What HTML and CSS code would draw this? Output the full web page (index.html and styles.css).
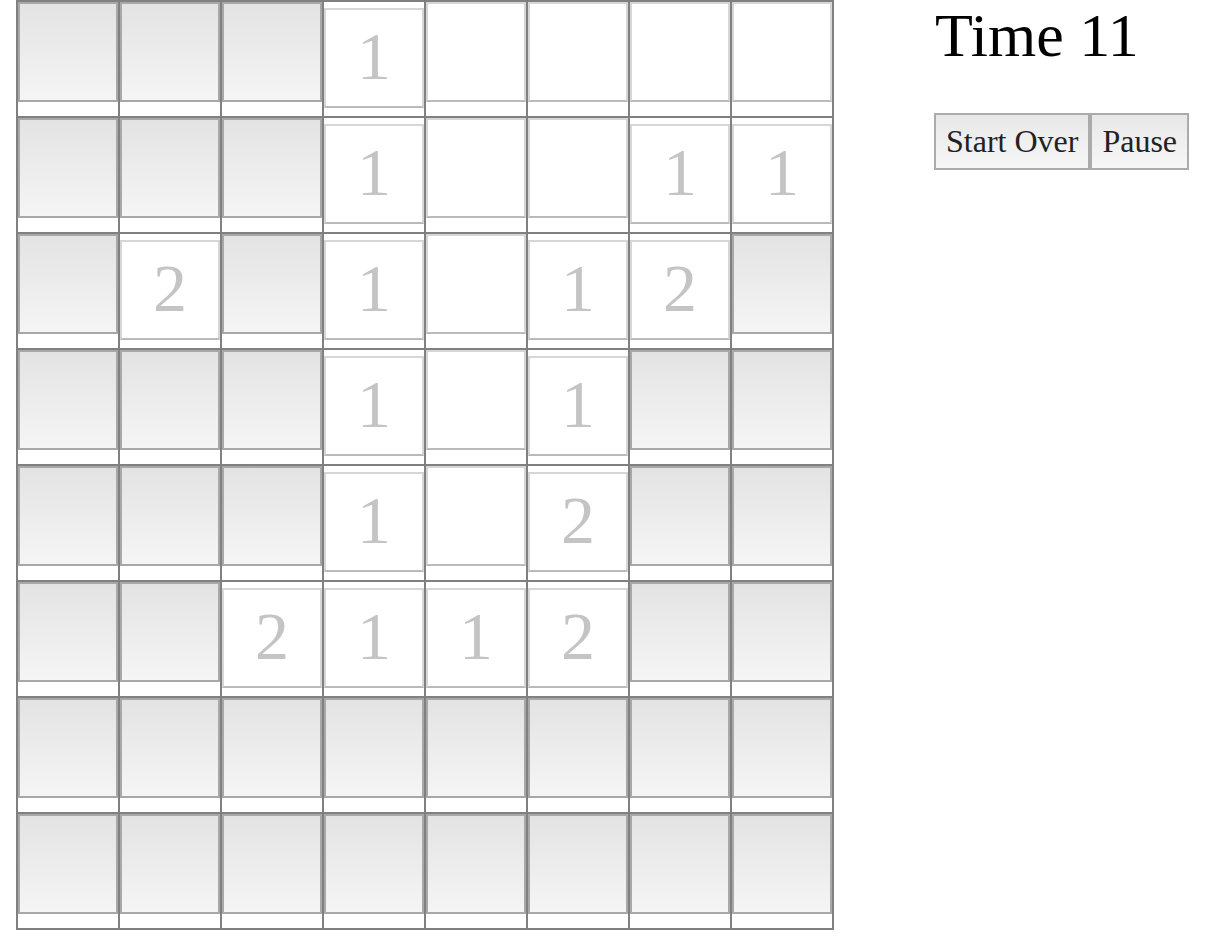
FILE: index.html
```html
<!DOCTYPE html>
<html>
<head>
<meta charset="utf-8">
<title>Minesweeper</title>
<link rel="stylesheet" href="styles.css">
</head>
<body>
<div class="page">
  <div class="board">
    <div class="cell"><button class="tile"></button></div>
    <div class="cell"><button class="tile"></button></div>
    <div class="cell"><button class="tile"></button></div>
    <div class="cell"><button class="tile open num">1</button></div>
    <div class="cell"><button class="tile open"></button></div>
    <div class="cell"><button class="tile open"></button></div>
    <div class="cell"><button class="tile open"></button></div>
    <div class="cell"><button class="tile open"></button></div>

    <div class="cell"><button class="tile"></button></div>
    <div class="cell"><button class="tile"></button></div>
    <div class="cell"><button class="tile"></button></div>
    <div class="cell"><button class="tile open num">1</button></div>
    <div class="cell"><button class="tile open"></button></div>
    <div class="cell"><button class="tile open"></button></div>
    <div class="cell"><button class="tile open num">1</button></div>
    <div class="cell"><button class="tile open num">1</button></div>

    <div class="cell"><button class="tile"></button></div>
    <div class="cell"><button class="tile open num">2</button></div>
    <div class="cell"><button class="tile"></button></div>
    <div class="cell"><button class="tile open num">1</button></div>
    <div class="cell"><button class="tile open"></button></div>
    <div class="cell"><button class="tile open num">1</button></div>
    <div class="cell"><button class="tile open num">2</button></div>
    <div class="cell"><button class="tile"></button></div>

    <div class="cell"><button class="tile"></button></div>
    <div class="cell"><button class="tile"></button></div>
    <div class="cell"><button class="tile"></button></div>
    <div class="cell"><button class="tile open num">1</button></div>
    <div class="cell"><button class="tile open"></button></div>
    <div class="cell"><button class="tile open num">1</button></div>
    <div class="cell"><button class="tile"></button></div>
    <div class="cell"><button class="tile"></button></div>

    <div class="cell"><button class="tile"></button></div>
    <div class="cell"><button class="tile"></button></div>
    <div class="cell"><button class="tile"></button></div>
    <div class="cell"><button class="tile open num">1</button></div>
    <div class="cell"><button class="tile open"></button></div>
    <div class="cell"><button class="tile open num">2</button></div>
    <div class="cell"><button class="tile"></button></div>
    <div class="cell"><button class="tile"></button></div>

    <div class="cell"><button class="tile"></button></div>
    <div class="cell"><button class="tile"></button></div>
    <div class="cell"><button class="tile open num">2</button></div>
    <div class="cell"><button class="tile open num">1</button></div>
    <div class="cell"><button class="tile open num">1</button></div>
    <div class="cell"><button class="tile open num">2</button></div>
    <div class="cell"><button class="tile"></button></div>
    <div class="cell"><button class="tile"></button></div>

    <div class="cell"><button class="tile"></button></div>
    <div class="cell"><button class="tile"></button></div>
    <div class="cell"><button class="tile"></button></div>
    <div class="cell"><button class="tile"></button></div>
    <div class="cell"><button class="tile"></button></div>
    <div class="cell"><button class="tile"></button></div>
    <div class="cell"><button class="tile"></button></div>
    <div class="cell"><button class="tile"></button></div>

    <div class="cell"><button class="tile"></button></div>
    <div class="cell"><button class="tile"></button></div>
    <div class="cell"><button class="tile"></button></div>
    <div class="cell"><button class="tile"></button></div>
    <div class="cell"><button class="tile"></button></div>
    <div class="cell"><button class="tile"></button></div>
    <div class="cell"><button class="tile"></button></div>
    <div class="cell"><button class="tile"></button></div>
  </div>
  <div class="panel">
    <div class="time">Time 11</div>
    <div class="controls">
      <button class="ctrl">Start Over</button><button class="ctrl">Pause</button>
    </div>
  </div>
</div>
</body>
</html>
```

FILE: styles.css
```css
html, body {
  margin: 0;
  padding: 0;
  background: #ffffff;
}

body {
  font-family: "Liberation Serif", "Times New Roman", serif;
  color: #000000;
}

.page {
  display: flex;
  align-items: flex-start;
  padding-left: 16px;
}

.board {
  display: grid;
  grid-template-columns: repeat(8, 100px);
  grid-auto-rows: 114px;
  gap: 2px;
  padding: 2px;
  background: #808080;
}

.cell {
  background: #ffffff;
}

.tile {
  display: flex;
  align-items: center;
  justify-content: center;
  box-sizing: border-box;
  width: 100px;
  height: 100px;
  margin: 0;
  padding: 0 0 4px 0;
  border: 2px solid #a8a8a8;
  border-radius: 0;
  background: linear-gradient(to bottom, #e3e3e3, #f5f5f5);
  font-family: "Liberation Serif", "Times New Roman", serif;
  font-size: 68px;
  line-height: 1.15;
  color: #c4c4c4;
  -webkit-appearance: none;
  appearance: none;
}

.tile.open {
  background: #ffffff;
  border-color: #d6d6d6;
  border-bottom-color: #bababa;
}

.tile.num {
  margin-top: 6px;
}

.panel {
  margin-left: 100px;
  display: flex;
  flex-direction: column;
}

.time {
  font-size: 62px;
  line-height: 1.107;
  padding-top: 1px;
  margin-left: 1px;
}

.controls {
  display: flex;
  margin-top: 43px;
}

.ctrl {
  margin: 0;
  padding: 8px 10px 9px 10px;
  border: 2px solid #ababab;
  border-radius: 0;
  background: linear-gradient(to bottom, #e8e8e8, #f6f6f6);
  font-family: "Liberation Serif", "Times New Roman", serif;
  font-size: 32px;
  line-height: 1.15;
  color: #222222;
  -webkit-appearance: none;
  appearance: none;
}
```
